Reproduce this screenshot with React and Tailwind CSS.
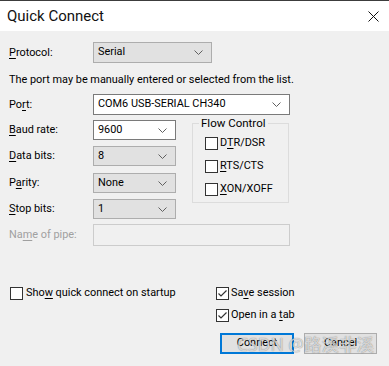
import React from "react";

const Chevron = () => (
  <svg width="9" height="5" viewBox="0 0 9 5" className="shrink-0">
    <path d="M0.5 0.5 L4.5 4.5 L8.5 0.5" fill="none" stroke="#606060" strokeWidth="1" />
  </svg>
);

const Combo = ({ value, width, white, tall }) => (
  <div
    className={`flex items-center justify-between pl-[4px] pr-[8px] border ${
      white ? "bg-white border-[#7a7a7a]" : "bg-[#e1e1e1] border-[#adadad]"
    } ${tall ? "h-[21px]" : "h-[20px]"}`}
    style={{ width }}
  >
    <span className="leading-none">{value}</span>
    <Chevron />
  </div>
);

const U = ({ children }) => <span className="underline underline-offset-[2px]">{children}</span>;

const Check = ({ checked }) => (
  <div className="w-[13px] h-[13px] border border-[#333] bg-white flex items-center justify-center shrink-0">
    {checked && (
      <svg width="11" height="11" viewBox="0 0 11 11">
        <path d="M1.5 5.5 L4 8 L9.5 2.5" fill="none" stroke="#333" strokeWidth="1.2" />
      </svg>
    )}
  </div>
);

const Row = ({ label, children, className = "" }) => (
  <div className={`flex items-center ${className}`}>
    <div className="w-[84px]">{label}</div>
    {children}
  </div>
);

export default function App() {
  return (
    <div
      className="relative w-[389px] h-[366px] bg-[#f0f0f0] border-t border-[#3c3c3c] text-[10.9px] leading-[14px] text-black overflow-hidden"
      style={{ fontFamily: "Roboto, 'Liberation Sans', sans-serif" }}
    >
      {/* title bar */}
      <div className="h-[30px] bg-white flex items-center justify-between pl-[7px] pr-[10px]">
        <span className="text-[15px] leading-[20px] text-[#111]">Quick Connect</span>
        <svg width="11" height="11" viewBox="0 0 11 11">
          <path d="M0.5 0.5 L10.5 10.5 M10.5 0.5 L0.5 10.5" stroke="#111" strokeWidth="1" />
        </svg>
      </div>

      <div className="pl-[9px] pt-[11px]">
        <Row label={<><U>P</U>rotocol:</>}>
          <Combo value="Serial" width={119} tall />
        </Row>

        <div className="mt-[10px] h-[14px]">
          The port may be manually entered or selected from the list.
        </div>

        <Row label={<>Po<U>r</U>t:</>} className="mt-[7px]">
          <Combo value="COM6 USB-SERIAL CH340" width={197} white tall />
        </Row>

        <div className="flex mt-[2px]">
          <div className="flex flex-col">
            <Row label={<><U>B</U>aud rate:</>} className="mt-[3px]">
              <Combo value="9600" width={83} white />
            </Row>
            <Row label={<><U>D</U>ata bits:</>} className="mt-[6px]">
              <Combo value="8" width={83} />
            </Row>
            <Row label={<>P<U>a</U>rity:</>} className="mt-[7px]">
              <Combo value="None" width={83} />
            </Row>
            <Row label={<><U>S</U>top bits:</>} className="mt-[6px]">
              <Combo value="1" width={83} />
            </Row>
          </div>

          <div className="relative ml-[16px] mt-[6px] w-[97px] h-[80px] border border-[#dcdcdc]">
            <span className="absolute -top-[8px] left-[6px] px-[2px] bg-[#f0f0f0] text-[11.5px]">
              Flow Control
            </span>
            <div className="flex flex-col gap-[9px] pl-[12px] pt-[12px]">
              <div className="flex items-center gap-[2px]">
                <Check />
                <span>D<U>T</U>R/DSR</span>
              </div>
              <div className="flex items-center gap-[2px]">
                <Check />
                <span><U>R</U>TS/CTS</span>
              </div>
              <div className="flex items-center gap-[2px]">
                <Check />
                <span><U>X</U>ON/XOFF</span>
              </div>
            </div>
          </div>
        </div>

        <Row label={<span className="text-[#a0a0a0]">Na<U>m</U>e of pipe:</span>} className="mt-[5px]">
          <div className="w-[197px] h-[22px] border border-[#cccccc] bg-[#f0f0f0]" />
        </Row>

        <div className="flex mt-[40px]">
          <div className="flex items-center gap-[3px] w-[207px] pl-[1px] self-start">
            <Check />
            <span>Sho<U>w</U> quick connect on startup</span>
          </div>
          <div className="flex flex-col gap-[8px]">
            <div className="flex items-center gap-[2px]">
              <Check checked />
              <span>Sa<U>v</U>e session</span>
            </div>
            <div className="flex items-center gap-[2px]">
              <Check checked />
              <span>Open in a <U>t</U>ab</span>
            </div>
          </div>
        </div>

        <div className="flex justify-end gap-[10px] pr-[12px] mt-[11px]">
          <button className="w-[74px] h-[21px] bg-[#e1e1e1] border-2 border-[#0078d7] leading-none">
            Connect
          </button>
          <button className="w-[73px] h-[21px] bg-[#e1e1e1] border border-[#adadad] leading-none">
            Cancel
          </button>
        </div>
      </div>

      {/* watermark */}
      <div
        className="pointer-events-none absolute left-[237px] top-[332px] text-[17.5px] leading-[22px] text-white/70 whitespace-nowrap [text-shadow:0_0_1px_rgba(0,0,0,0.55)]"
        style={{ fontFamily: "'Noto Sans', 'Noto Sans CJK SC', sans-serif" }}
      >
        CSDN @路溪非溪
      </div>
    </div>
  );
}
